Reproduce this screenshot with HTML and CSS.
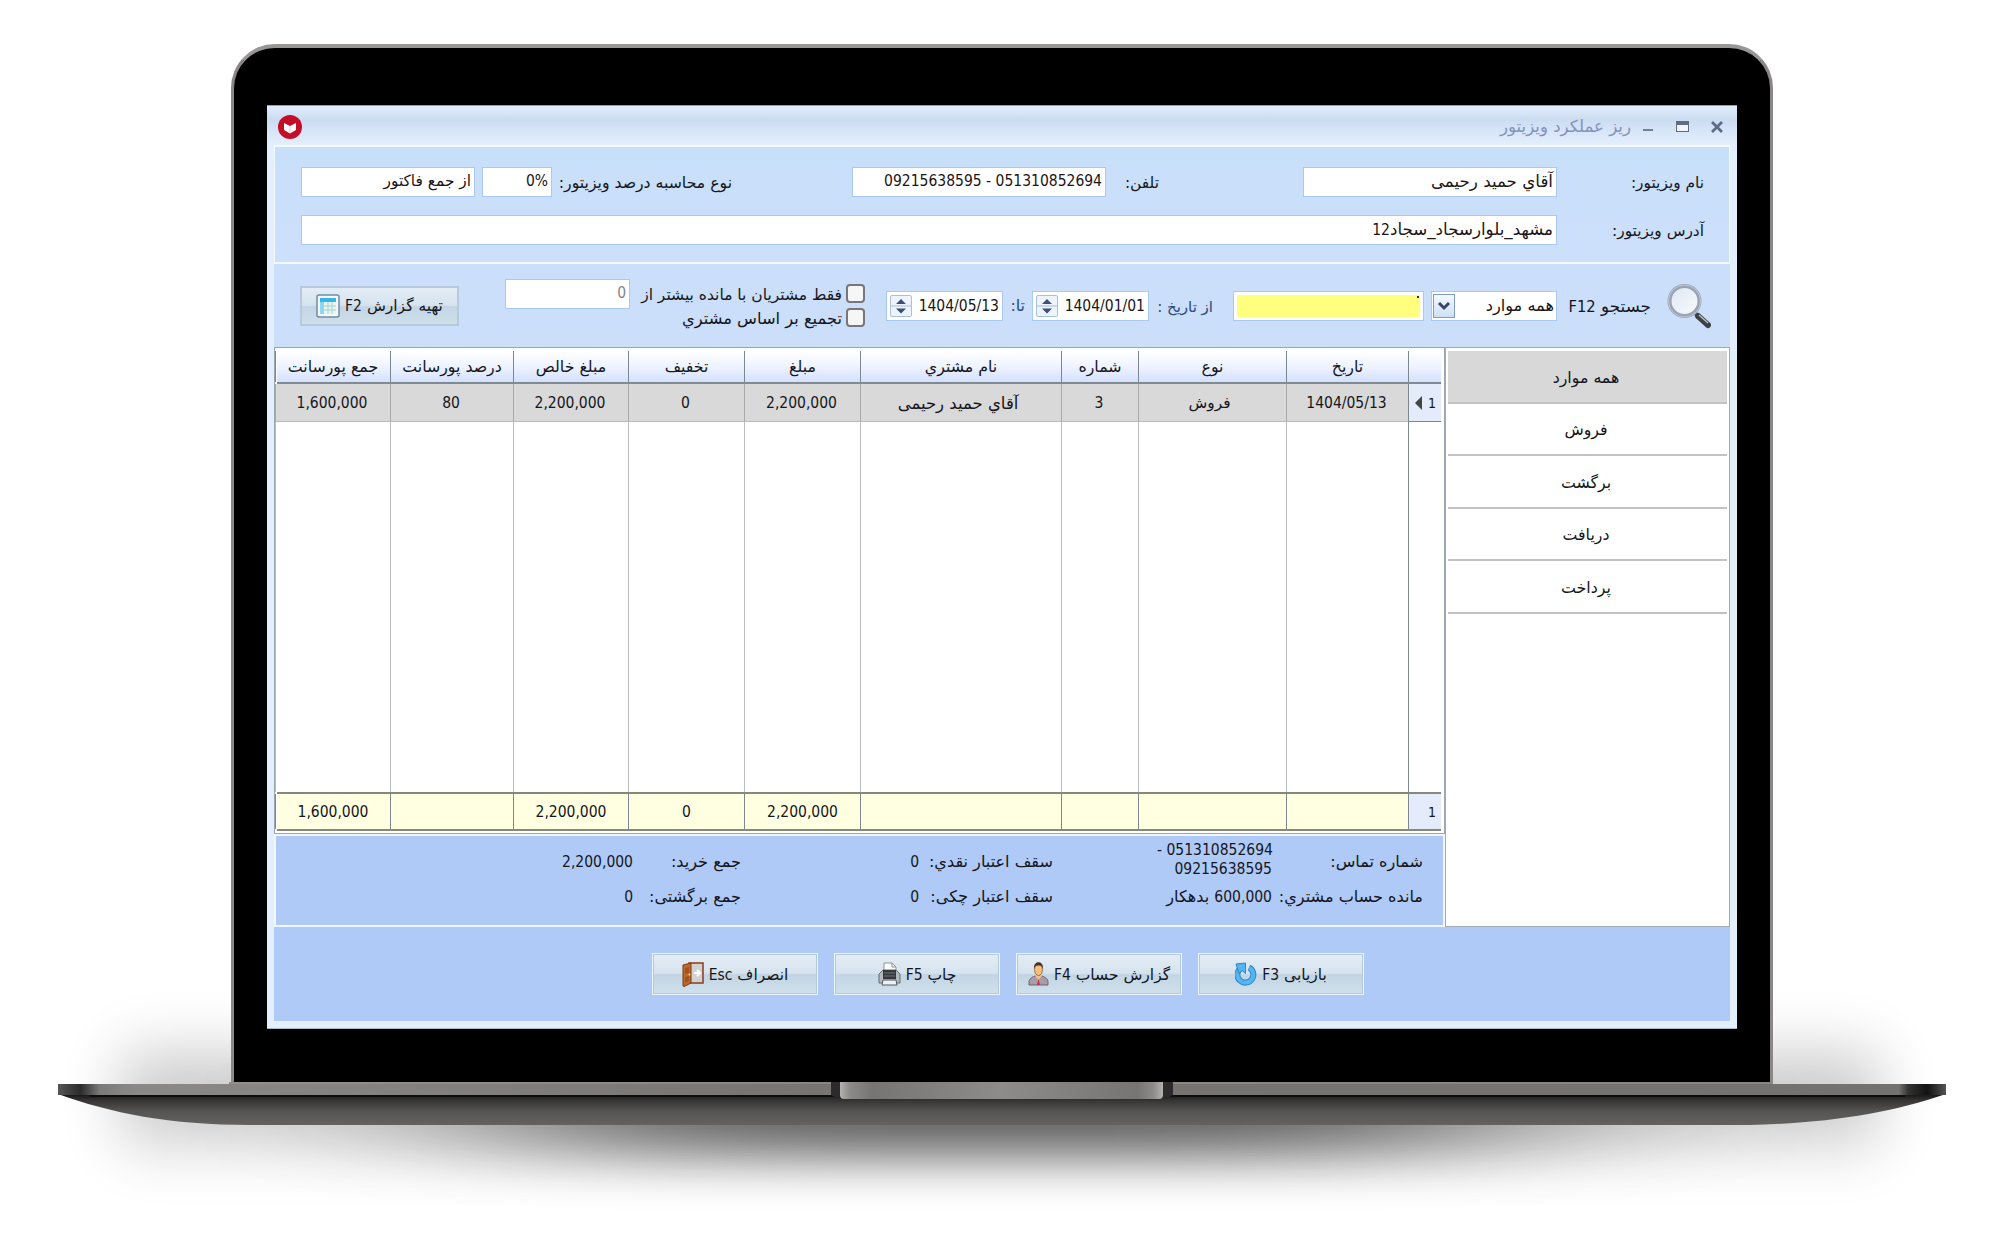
FILE: index.html
```html
<!DOCTYPE html>
<html lang="fa" dir="rtl">
<head>
    <meta charset="UTF-8">
    <meta name="viewport" content="width=device-width, initial-scale=1.0">
    <title>ریز عملکرد ویزیتور</title>
    <link rel="stylesheet" href="styles.css">
</head>
<body>
    <div class="laptop">
        <svg class="shadow" width="2000" height="1247" viewBox="0 0 2000 1247">
            <defs>
                <filter id="soft" x="-30%" y="-150%" width="160%" height="400%"><feGaussianBlur stdDeviation="30 34"/></filter>
                <filter id="softer" x="-50%" y="-100%" width="200%" height="300%"><feGaussianBlur stdDeviation="150 25"/></filter>
            </defs>
            <rect x="120" y="1058" width="1760" height="80" fill="#000" opacity=".23" filter="url(#soft)"/>
            <rect x="520" y="1070" width="960" height="86" fill="#000" opacity=".54" filter="url(#softer)"/>
        </svg>

        <div class="lid">
            <div class="window">
                <div class="titlebar">
                    <svg class="win-btns" width="88" height="20" viewBox="0 0 88 20">
                        <path d="M76 5l10 10M86 5l-10 10" stroke="#5f6b86" stroke-width="2.8"/>
                        <rect x="40.500" y="4.500" width="12" height="10" fill="#f1f5fb" stroke="#5f6b86"/>
                        <rect x="40" y="4" width="13" height="4" fill="#5f6b86"/>
                        <path d="M7 13h10" stroke="#7a7f90" stroke-width="2"/>
                    </svg>
                    <span class="title">ریز عملکرد ویزیتور</span>
                    <svg class="logo" width="24" height="24" viewBox="0 0 24 24">
                        <circle cx="12" cy="12" r="12" fill="#c40d26"/>
                        <path d="M6 8l6 3 6-3v7l-6 3.500-6-3.500z" fill="#fff"/>
                        <path d="M12 11v7" stroke="#f0c4ca" stroke-width="1"/>
                    </svg>
                </div>

                <div class="info">
                    <label>نام ویزیتور:</label>
                    <div class="field">آقاي حمید رحیمی</div>
                    <label class="col-phone">تلفن:</label>
                    <div class="field"><bdi class="n" dir="ltr">09215638595 - 051310852694</bdi></div>
                    <label class="col-type">نوع محاسبه درصد ویزیتور:</label>
                    <div class="field"><bdi class="n" dir="ltr">0%</bdi></div>
                    <div class="field col-last">از جمع فاکتور</div>
                    <label>آدرس ویزیتور:</label>
                    <div class="field wide"><span>مشهد_بلوارسجاد_سجاد<span class="n">12</span></span></div>
                </div>

                <div class="filters">
                    <svg class="search-icon" width="44" height="46" viewBox="0 0 44 46">
                        <defs>
                            <linearGradient id="glass" x1="0" y1="0" x2="1" y2="1"><stop offset="0" stop-color="#dfe6f3"/><stop offset="1" stop-color="#f8fbff"/></linearGradient>
                        </defs>
                        <path d="M27 29l5 5" stroke="#8d949c" stroke-width="4"/>
                        <path d="M31 33l10 9" stroke="#3c4145" stroke-width="6" stroke-linecap="round"/>
                        <path d="M32 32l9 8" stroke="#b9bfc4" stroke-width="1.500"/>
                        <circle cx="17.500" cy="18" r="15" fill="url(#glass)" stroke="#9aa3b4" stroke-width="4"/>
                        <circle cx="17.500" cy="18" r="16" fill="none" stroke="#c3cad6" stroke-width="1"/>
                    </svg>
                    <label class="search-label">جستجو <span class="n">F12</span></label>
                    <div class="field combo">
                        <span>همه موارد</span>
                        <span class="drop"><svg width="14" height="10" viewBox="0 0 14 10"><path d="M2 2l5 5 5-5" fill="none" stroke="#35456b" stroke-width="3"/></svg></span>
                    </div>
                    <div class="field yellow"><i></i></div>
                    <label class="from">از تاریخ :</label>
                    <div class="field date"><bdi class="n" dir="ltr">1404/01/01</bdi>
                        <span class="spin"><svg width="20" height="20" viewBox="0 0 20 20"><path d="M5 8l5-5 5 5zM5 12.500l5 5 5-5z" fill="#3d4f78"/><path d="M0 10h20" stroke="#a9bbd6"/></svg></span>
                    </div>
                    <label class="to">تا:</label>
                    <div class="field date"><bdi class="n" dir="ltr">1404/05/13</bdi>
                        <span class="spin"><svg width="20" height="20" viewBox="0 0 20 20"><path d="M5 8l5-5 5 5zM5 12.500l5 5 5-5z" fill="#3d4f78"/><path d="M0 10h20" stroke="#a9bbd6"/></svg></span>
                    </div>
                    <div class="checks">
                        <div class="check"><i class="box"></i><span>فقط مشتریان با مانده بیشتر از</span></div>
                        <div class="check"><i class="box"></i><span class="group">تجمیع بر اساس مشتري</span></div>
                    </div>
                    <div class="field amount n">0</div>
                    <div class="btn report">
                        <span>تهیه گزارش <span class="n">F2</span></span>
                        <svg width="24" height="24" viewBox="0 0 24 24">
                            <rect x="1" y="1" width="22" height="22" rx="2" fill="#f4f8fb" stroke="#6f8ba8" stroke-width="1.500"/>
                            <rect x="4" y="4" width="16" height="16" fill="#e8f5ec"/>
                            <path d="M4 4h16v4H4z" fill="#35b5ea"/>
                            <path d="M4 8h4v12H4z" fill="#8fd6f5"/>
                            <path d="M8 12h12M8 16h12M12 8v12M16 8v12" stroke="#a8cfd6" stroke-width="1"/>
                        </svg>
                    </div>
                </div>

                <div class="main">
                    <div class="side">
                        <div class="item active">همه موارد</div>
                        <div class="item">فروش</div>
                        <div class="item">برگشت</div>
                        <div class="item">دریافت</div>
                        <div class="item">پرداخت</div>
                    </div>
                    <div class="left">
                        <div class="table">
                            <div class="row head">
                                <div></div><div>تاریخ</div><div>نوع</div><div>شماره</div><div>نام مشتري</div><div>مبلغ</div><div>تخفیف</div><div>مبلغ خالص</div><div>درصد پورسانت</div><div>جمع پورسانت</div>
                            </div>
                            <div class="row data n">
                                <div class="num">1<svg width="7" height="14" viewBox="0 0 7 14"><path d="M7 0v14L0 7z" fill="#444"/></svg></div><div>1404/05/13</div><div class="fa kind">فروش</div><div>3</div><div class="fa">آقاي حمید رحیمی</div><div>2,200,000</div><div>0</div><div>2,200,000</div><div>80</div><div>1,600,000</div>
                            </div>
                            <div class="row blank">
                                <div></div><div></div><div></div><div></div><div></div><div></div><div></div><div></div><div></div><div></div>
                            </div>
                            <div class="row total n">
                                <div class="num">1</div><div></div><div></div><div></div><div></div><div>2,200,000</div><div>0</div><div>2,200,000</div><div></div><div>1,600,000</div>
                            </div>
                        </div>
                        <div class="summary">
                            <span>شماره تماس:</span>
                            <span class="phones n"><bdi dir="ltr">- 051310852694</bdi><bdi dir="ltr">09215638595</bdi></span>
                            <span>سقف اعتبار نقدي:</span>
                            <span class="n">0</span>
                            <span>جمع خرید:</span>
                            <span class="n">2,200,000</span>
                            <span>مانده حساب مشتري:</span>
                            <span><span class="n">600,000</span> بدهکار</span>
                            <span>سقف اعتبار چکی:</span>
                            <span class="n">0</span>
                            <span>جمع برگشتی:</span>
                            <span class="n">0</span>
                        </div>
                    </div>
                </div>

                <div class="actions">
                    <div class="btn">
                        <span>بازیابی <span class="n">F3</span></span>
                        <svg width="22" height="24" viewBox="0 0 22 24">
                            <path d="M14 5.500a8 8 0 1 1-8.500.8" fill="none" stroke="#2b86c8" stroke-width="6"/>
                            <path d="M14 5.500a8 8 0 1 1-8.500.8" fill="none" stroke="#55b5ee" stroke-width="4"/>
                            <path d="M1 2l9.500-1v10.500L7 8.500l-3 3z" fill="#55b5ee" stroke="#2b86c8"/>
                        </svg>
                    </div>
                    <div class="btn">
                        <span>گزارش حساب <span class="n">F4</span></span>
                        <svg width="21" height="24" viewBox="0 0 21 24">
                            <path d="M1 23v-3c0-3 3-5 6-6h7c3 1 6 3 6 6v3z" fill="#a99ba8" stroke="#6d6470"/>
                            <path d="M7 14l3.500 4 3.500-4-1-3H8z" fill="#f0c089"/>
                            <path d="M10.500 17l-1.500 6h3z" fill="#b8353f"/>
                            <ellipse cx="10.500" cy="7.500" rx="4" ry="6" fill="#f3be80" stroke="#8c5a2c" stroke-width=".8"/>
                            <path d="M6 7c-1-9 10-9 9 0-1-3-2-3.500-4.500-3.500S7 4 6 7z" fill="#4a3020"/>
                        </svg>
                    </div>
                    <div class="btn">
                        <span>چاپ <span class="n">F5</span></span>
                        <svg width="23" height="24" viewBox="0 0 23 24">
                            <path d="M6 9V1h8l4 4v4z" fill="#fff" stroke="#8c9298"/>
                            <path d="M14 1v4h4" fill="none" stroke="#8c9298"/>
                            <path d="M1 12l4-4h13l4 4v9H1z" fill="#b4b9bd" stroke="#666c70"/>
                            <path d="M5 8h13v9H5z" fill="#34383b"/>
                            <path d="M6 11h11M6 14h11" stroke="#6d7377"/>
                            <path d="M5 18h13l1 5H4z" fill="#eef1f2" stroke="#555b5f"/>
                        </svg>
                    </div>
                    <div class="btn">
                        <span>انصراف <span class="n">Esc</span></span>
                        <svg width="22" height="25" viewBox="0 0 22 25">
                            <rect x="7" y="1" width="14" height="20" fill="#cfd3d1" stroke="#8c3b1c" stroke-width="1.500"/>
                            <path d="M12 11h6M15 8l3 3-3 3" fill="none" stroke="#fff" stroke-width="2"/>
                            <path d="M1 3l8-2v20l-7 3.500-1-.5z" fill="#bd6a2e" stroke="#7c3b14"/>
                            <path d="M3 6l4-1v6l-4 1zM3 15l4-1v5l-4 2z" fill="#a35322"/>
                            <circle cx="7.500" cy="12.500" r="1" fill="#f3d48a"/>
                        </svg>
                    </div>
                </div>
            </div>
        </div>

        <svg class="base" width="1888" height="45" viewBox="58 1081 1888 45">
            <defs>
                <linearGradient id="under" x1="0" y1="0" x2="0" y2="1"><stop offset="0" stop-color="#141212"/><stop offset=".2" stop-color="#363433"/><stop offset=".55" stop-color="#565453"/><stop offset="1" stop-color="#636260"/></linearGradient>
                <linearGradient id="strip" x1="0" y1="0" x2="1" y2="0"><stop offset="0" stop-color="#555"/><stop offset=".012" stop-color="#2b2b2b"/><stop offset=".022" stop-color="#7a7a7a"/><stop offset=".04" stop-color="#8b8988"/><stop offset=".4" stop-color="#777472"/><stop offset=".975" stop-color="#747270"/><stop offset=".98" stop-color="#333"/><stop offset=".99" stop-color="#111"/><stop offset="1" stop-color="#555"/></linearGradient>
                <linearGradient id="notch" x1="0" y1="0" x2="1" y2="0"><stop offset="0" stop-color="#b5b3b2"/><stop offset=".03" stop-color="#8d8b8a"/><stop offset=".1" stop-color="#777573"/><stop offset=".5" stop-color="#8d8c8a"/><stop offset=".92" stop-color="#777573"/><stop offset=".97" stop-color="#8d8b8a"/><stop offset="1" stop-color="#b5b3b2"/></linearGradient>
            </defs>
            <path d="M58 1094C110 1113 170 1125 250 1125H1750C1830 1123 1890 1113 1946 1094z" fill="url(#under)"/>
            <path d="M58 1084H229V1082H1773V1084H1946V1095H58z" fill="url(#strip)"/>
            <path d="M90 1096H1905" stroke="#080808" stroke-width="1.500"/>
            <path d="M229 1083H1773" stroke="#9b9997"/>
            <path d="M831 1082h10v15h-6l-4-2zM1163 1082h10v13l-4 2h-6z" fill="#2c2a2a"/>
            <path d="M840 1082h323v13q0 4-4 4H844q-4 0-4-4z" fill="url(#notch)"/>
        </svg>
    </div>
</body>
</html>
```
FILE: styles.css
```css
* {
    box-sizing: border-box;
}
body {
    margin: 0;
    background: #fff;
    font-family: "DejaVu Sans", sans-serif;
    font-size: 15.8px;
    color: #14161c;
    white-space: nowrap;
}
svg {
    display: block;
    flex: none;
}

/* digits and latin text */
.n {
    font-family: "DejaVu Sans Condensed", "DejaVu Sans", sans-serif;
    font-size: 15.5px;
}

/* laptop */
.laptop {
    position: relative;
    width: 2000px;
    height: 1247px;
    overflow: hidden;
    padding-top: 44px;
    display: flex;
    flex-direction: column;
    align-items: center;
}
.shadow {
    position: absolute;
    left: 0;
    top: 0;
}
.lid {
    position: relative;
    width: 1542px;
    height: 1040px;
    margin-left: 4px;
    padding: 57px 33px 0;
    background: #000;
    border: 3px solid #8a8786;
    border-top: 4px solid #999796;
    border-bottom: 0;
    border-radius: 44px 44px 0 0;
}
.base {
    position: relative;
    margin-top: -3px;
    margin-left: 4px;
}

/* window */
.window {
    width: 1470px;
    height: 924px;
    padding: 0 7px;
    background: #e3effc;
    border-top: 1px solid #8f9fb8;
    border-bottom: 1px solid #a9b9c4;
}
.titlebar {
    height: 39px;
    margin: 0 -7px;
    padding: 2px 8px 0 11px;
    display: flex;
    align-items: center;
    background: linear-gradient(#e2edfb, #cbdcf1 35%, #d5e4f8 60%, #e4effc);
}
.title {
    margin-right: 5px;
    color: #8592ba;
    font-size: 16.6px;
}
.logo {
    margin-right: auto;
}
.win-btns {
    margin-right: 5px;
}
.field {
    height: 30px;
    padding: 0 3px 2px;
    background: #fff;
    border: 1px solid #a9c9f0;
    display: flex;
    align-items: center;
    color: #1c1416;
}
.info .field {
    font-size: 16.7px;
}
.info .field .n {
    font-size: 15.5px;
}

/* visitor info */
.info {
    display: grid;
    grid-template-columns: 147px 254px 197px 254px 300px 70px 181px;
    row-gap: 17px;
    align-items: center;
    height: 119px;
    padding: 19px 25px 17px 0;
    background: linear-gradient(#c8dffa, #cddffb);
    border: 2px solid #f3f9ff;
    border-right-width: 1px;
    border-left-width: 1px;
}
.info label {
    padding-top: 2px;
    font-size: 15.4px;
}
.info .col-phone {
    padding-right: 144px;
}
.info .col-type {
    padding-right: 120px;
    font-size: 15.7px;
}
.info .col-last {
    margin-right: 7px;
    font-size: 15.4px;
}
.wide {
    grid-column: 2 / 8;
}

/* filters */
.filters {
    height: 83px;
    padding-right: 19px;
    display: flex;
    align-items: center;
    background: #cbdefa;
}
.search-label {
    width: 94px;
    margin-right: 16px;
    font-size: 16.8px;
}
.search-label .n {
    font-size: 16.4px;
}
.combo {
    width: 126px;
    justify-content: space-between;
    padding: 0 2px 0 1px;
    font-size: 16.2px;
}
.drop {
    width: 22px;
    height: 24px;
    border: 1px solid #7f9cc4;
    background: linear-gradient(#f4f9ff, #cfe0f5);
    display: flex;
    align-items: center;
    justify-content: center;
}
.yellow {
    width: 191px;
    margin: 0 7px 0 20px;
    padding: 3px;
    align-items: stretch;
}
.yellow i {
    flex: 1;
    background: radial-gradient(circle 1.5px at calc(100% - 2px) 2px, #333 50%, transparent) #ffff7e;
}
.from {
    width: 64px;
    padding-top: 2px;
    font-size: 15px;
    color: #2a4a80;
}
.to {
    width: 22px;
    margin-right: 7px;
    color: #2a4a80;
}
.date {
    width: 117px;
    justify-content: space-between;
    padding-bottom: 0;
}
.spin {
    width: 22px;
    height: 22px;
    border: 1px solid #a9c0e0;
    border-radius: 2px;
    background: #edf4fd;
}
.checks {
    width: 235px;
    margin-right: 21px;
    font-size: 15.5px;
}
.group {
    font-size: 16.3px;
}
.check {
    height: 24px;
    display: flex;
    align-items: center;
    gap: 4px;
}
.check span {
    padding-top: 2px;
}
.box {
    flex: none;
    width: 19px;
    height: 19px;
    border: 2px solid #76777a;
    border-radius: 4px;
    background: #f6f6f6;
}
.amount {
    width: 125px;
    margin-bottom: 24px;
    color: #84858a;
}
.btn {
    width: 166px;
    height: 42px;
    display: flex;
    align-items: center;
    justify-content: center;
    gap: 5px;
    font-size: 15.5px;
    border: 1px solid #eaf5fb;
    box-shadow: inset 0 0 0 1px #b4cbdc;
    background: linear-gradient(#e3edf5, #d6e3ee 48%, #c3d4e5 52%, #cfe1ea);
}
.btn span {
    padding-top: 1px;
}
.report {
    width: 159px;
    height: 40px;
    margin-right: 46px;
    border-color: #b5cadf;
}

/* table and side list */
.main {
    height: 580px;
    display: flex;
}
.side {
    width: 285px;
    padding: 3px 2px 0;
    background: #fff;
    border: 1px solid #a0abb8;
}
.item {
    height: 52.5px;
    padding: 2px 3px 0 0;
    display: flex;
    align-items: center;
    justify-content: center;
    border-bottom: 2px solid #c3c3c3;
}
.active {
    background: #d8d8d8;
}
.left {
    width: 1171px;
}
.table {
    height: 487px;
    padding: 3px 3px 0 2px;
    background: #fff;
    border: 1px solid #9ba5b0;
}
.row {
    display: grid;
    grid-template-columns: 33px 122px 148px 77px 201px 116px 116px 115px 123px 115px;
}
.row div {
    display: flex;
    align-items: center;
    justify-content: center;
    border-left: 1px solid #7f878e;
}
.head {
    height: 33px;
    background: linear-gradient(#fff, #eef3ff 50%, #d3e0ff);
    border-bottom: 2px solid #7f8b90;
}
.data {
    height: 38px;
}
.data div {
    padding: 1px 2px 0 0;
    background: #d9d9d9;
    border-bottom: 1px solid #bababa;
    border-left-color: #a9a9a9;
}
.data .fa {
    padding-right: 6px;
    font-family: "DejaVu Sans", sans-serif;
    font-size: 16.5px;
}
.data .kind {
    font-size: 15.4px;
}
.row .num {
    justify-content: flex-start;
    padding-right: 5px;
    background: #e4ecfb;
    font-size: 14px;
    gap: 6px;
    border-left-color: #7f878e;
    border-bottom-color: #7f878e;
}
.blank {
    height: 370px;
}
.blank div {
    border-left-color: #bcbcbc;
}
.blank div:first-child {
    border-left-color: #7f878e;
}
.total {
    height: 39px;
    background: #ffffe1;
    border-top: 2px solid #85887c;
    border-bottom: 2px solid #85887c;
}
.summary {
    height: 93px;
    display: grid;
    grid-template-columns: 151px 219px 134px 178px 108px 200px;
    grid-template-rows: 35px 35px;
    align-items: center;
    padding: 8px 20px 0 0;
    font-size: 16.1px;
    background: #afcaf7;
    border: 2px solid #f1f7ff;
}
.phones {
    display: flex;
    flex-direction: column;
    line-height: 19px;
    padding-bottom: 3px;
}
.phones bdi {
    width: 115px;
    text-align: right;
}

/* bottom buttons */
.actions {
    height: 94px;
    display: flex;
    justify-content: center;
    gap: 16px;
    padding-top: 26px;
    padding-left: 12px;
    background: #afcaf7;
}
```
